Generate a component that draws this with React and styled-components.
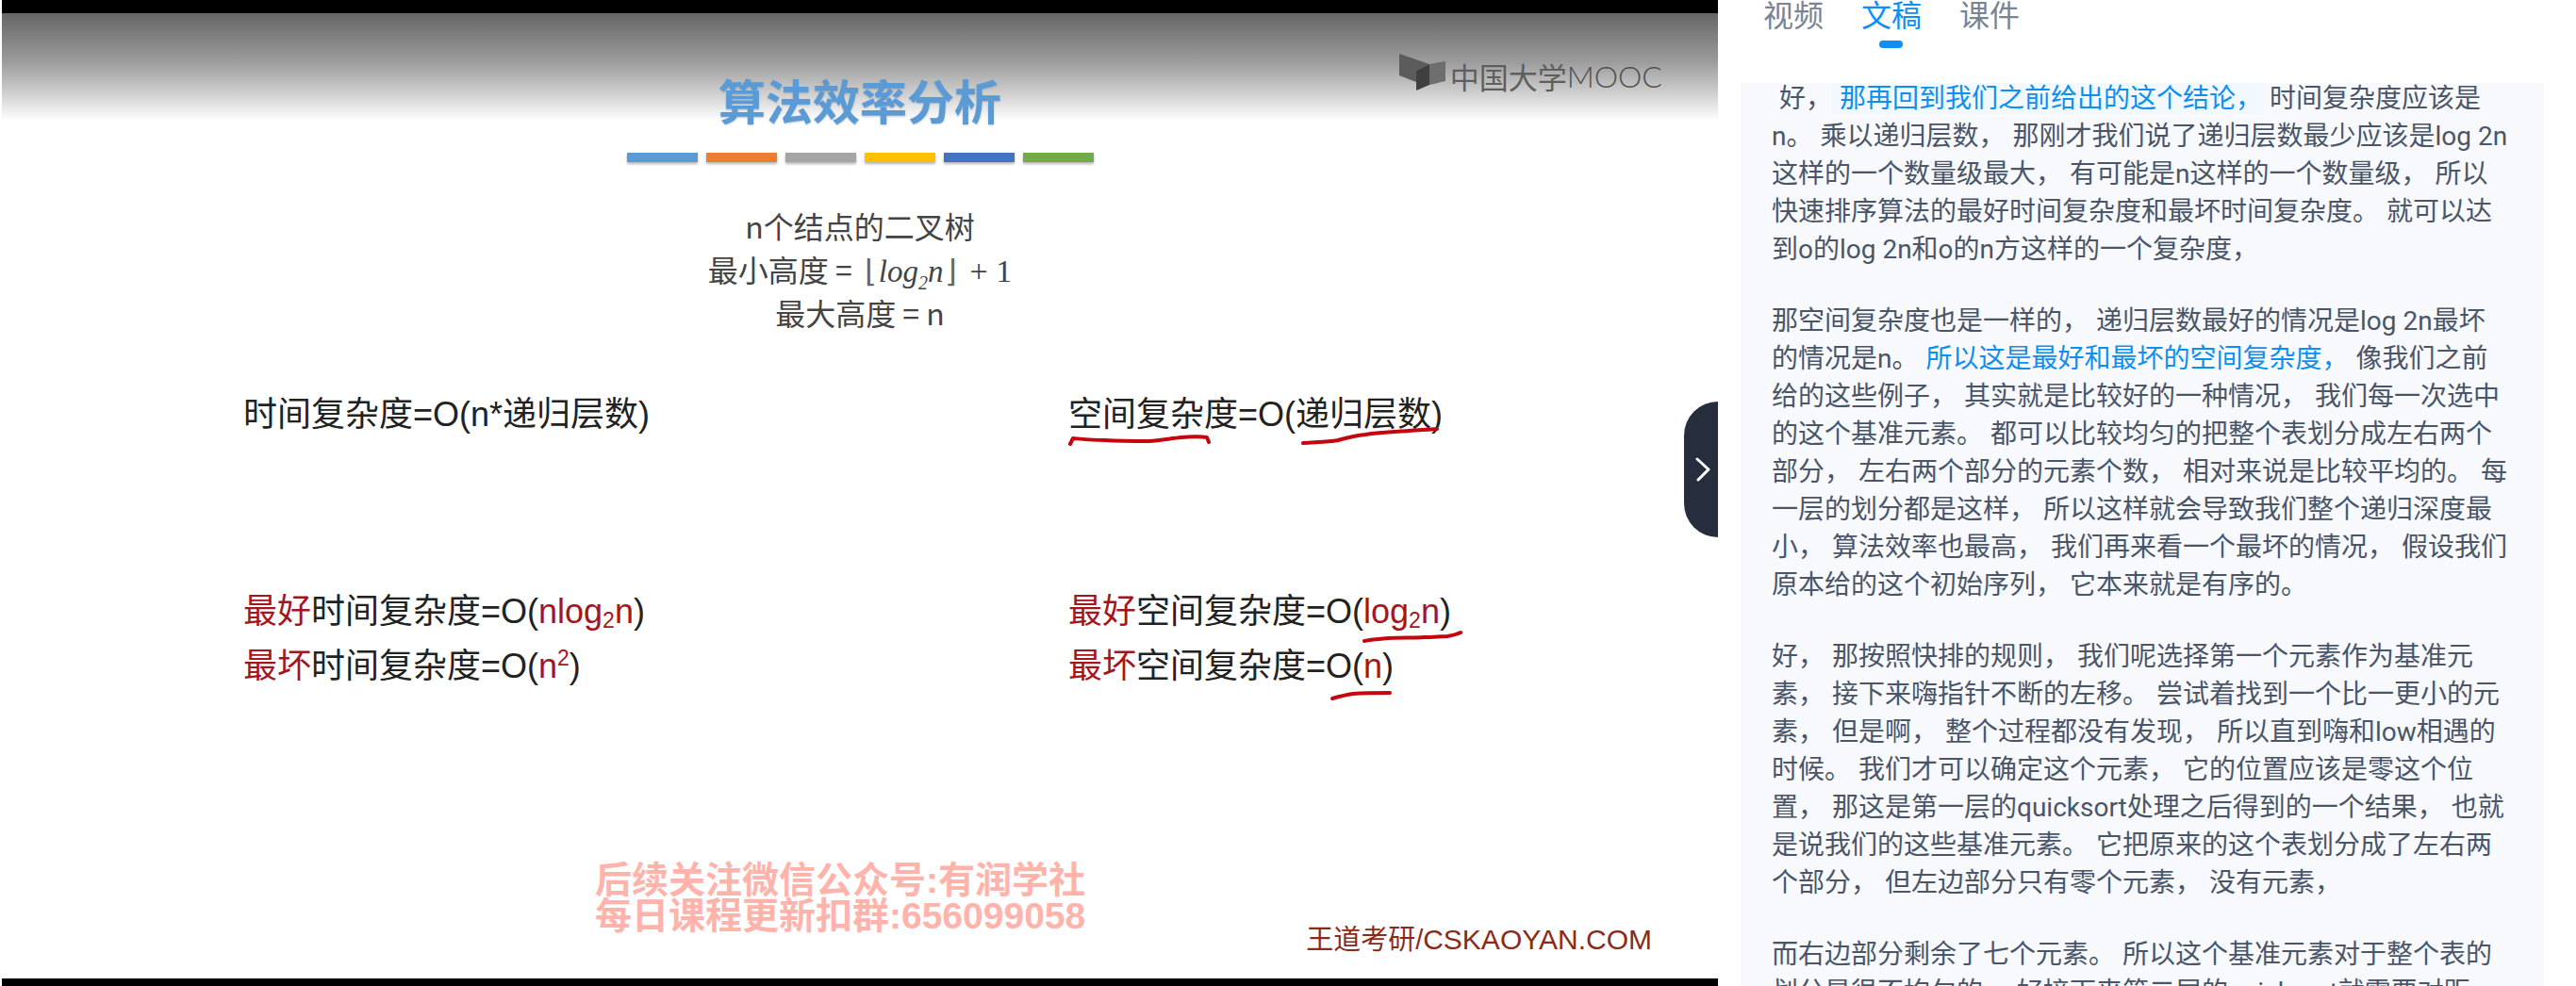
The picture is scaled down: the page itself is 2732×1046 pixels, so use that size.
import styled, { createGlobalStyle } from "styled-components";

const Global = createGlobalStyle`
  html, body {
    margin: 0;
    padding: 0;
    background: #fff;
    overflow: hidden;
  }
`;

const BARS = ["#5b9bd5", "#ed7d31", "#a5a5a5", "#ffc000", "#4472c4", "#70ad47"];

const TABS = [
  { label: "视频" },
  { label: "文稿", active: true },
  { label: "课件" },
];

const TRANSCRIPT = [
  [
    "好，",
    { text: "那再回到我们之前给出的这个结论，", tone: "active" },
    "时间复杂度应该是n。",
    "乘以递归层数，",
    "那刚才我们说了递归层数最少应该是log 2n这样的一个数量级最大，",
    "有可能是n这样的一个数量级，",
    "所以快速排序算法的最好时间复杂度和最坏时间复杂度。",
    "就可以达到o的log 2n和o的n方这样的一个复杂度，",
  ],
  [
    "那空间复杂度也是一样的，",
    "递归层数最好的情况是log 2n最坏的情况是n。",
    { text: "所以这是最好和最坏的空间复杂度，", tone: "mark" },
    "像我们之前给的这些例子，",
    "其实就是比较好的一种情况，",
    "我们每一次选中的这个基准元素。",
    "都可以比较均匀的把整个表划分成左右两个部分，",
    "左右两个部分的元素个数，",
    "相对来说是比较平均的。",
    "每一层的划分都是这样，",
    "所以这样就会导致我们整个递归深度最小，",
    "算法效率也最高，",
    "我们再来看一个最坏的情况，",
    "假设我们原本给的这个初始序列，",
    "它本来就是有序的。",
  ],
  [
    "好，",
    "那按照快排的规则，",
    "我们呢选择第一个元素作为基准元素，",
    "接下来嗨指针不断的左移。",
    "尝试着找到一个比一更小的元素，",
    "但是啊，",
    "整个过程都没有发现，",
    "所以直到嗨和low相遇的时候。",
    "我们才可以确定这个元素，",
    "它的位置应该是零这个位置，",
    "那这是第一层的quicksort处理之后得到的一个结果，",
    "也就是说我们的这些基准元素。",
    "它把原来的这个表划分成了左右两个部分，",
    "但左边部分只有零个元素，",
    "没有元素，",
  ],
  [
    "而右边部分剩余了七个元素。",
    "所以这个基准元素对于整个表的划分是很不均匀的，",
    "好接下来第二层的quicksort就需要对距",
  ],
];

export default function App() {
  return (
    <Page>
      <Global />
      <Video>
        <Letterbox $h={14} />
        <Slide>
          <Logo>
            <svg width="55" height="50" viewBox="12 10 55 50">
              <path d="M13 12 L45 23 L31 30 L31 42 L13 35 Z" fill="#5c5c5c" />
              <path d="M45 23 L62 20 L62 41 L45 45 Z" fill="#6e6e6e" />
              <path d="M31 30 L45 23 L45 45 L31 51 L31 56 Z" fill="#3f3f3f" />
            </svg>
            中国大学<LogoLatin>MOOC</LogoLatin>
          </Logo>
          <Title>算法效率分析</Title>
          <BarRow>
            {BARS.map((c) => (
              <Bar key={c} $color={c} />
            ))}
          </BarRow>
          <Caption>
            <div>n个结点的二叉树</div>
            <div>
              最小高度 =
              <MathText>
                <Bracket>⌊</Bracket>log<sub>2</sub>n<Bracket>⌋</Bracket>
              </MathText>
              <MathPlain>+ 1</MathPlain>
            </div>
            <div>最大高度 = n</div>
          </Caption>
          <FormulaGrid>
            <Formula>时间复杂度=O(n*递归层数)</Formula>
            <Formula>空间复杂度=O(递归层数)</Formula>
          </FormulaGrid>
          <FormulaGrid $gap={151}>
            <div>
              <Formula><Red>最好</Red>时间复杂度=O(<Red>nlog<Small>2</Small>n</Red>)</Formula>
              <Formula><Red>最坏</Red>时间复杂度=O(<Red>n<Small $up>2</Small></Red>)</Formula>
            </div>
            <div>
              <Formula><Red>最好</Red>空间复杂度=O(<Red>log<Small>2</Small>n</Red>)</Formula>
              <Formula><Red>最坏</Red>空间复杂度=O(<Red>n</Red>)</Formula>
            </div>
          </FormulaGrid>
          <SlideFooter>
            <Watermark>
              <div>后续关注微信公众号:有润学社</div>
              <div>每日课程更新扣群:656099058</div>
            </Watermark>
            <Credit>王道考研/<CreditLatin>CSKAOYAN.COM</CreditLatin></Credit>
          </SlideFooter>
          <Ink width="1820" height="1024" viewBox="2 14 1820 1024">
            <path d="M1135 471 L1138 465 C1150 466 1160 467 1172 467 C1190 468 1205 468 1218 468 C1232 467 1242 465 1253 464 C1262 463 1272 463 1280 464 L1282 469" />
            <path d="M1382 470 C1395 469 1408 469 1419 467 C1430 464 1438 462 1448 461 C1465 458 1480 458 1494 457 C1505 456 1515 456 1524 455" />
            <path d="M1447 680 C1455 678 1463 678 1473 677 C1487 676 1498 677 1511 676 C1520 676 1528 675 1535 675 C1541 674 1545 673 1549 671" />
            <path d="M1413 741 C1420 739 1428 737 1435 736 C1448 735 1460 735 1474 735" />
          </Ink>
          <Toggle>
            <svg width="18" height="28" viewBox="0 0 18 28">
              <path d="M3 3 L15 14 L4 25" fill="none" stroke="#fff" strokeWidth="3" strokeLinecap="round" strokeLinejoin="round" />
            </svg>
          </Toggle>
        </Slide>
        <Letterbox $h={8} />
      </Video>
      <Side>
        <Tabs>
          {TABS.map((t) => (
            <Tab key={t.label} $active={t.active}>
              {t.label}
              {t.active && <TabMark />}
            </Tab>
          ))}
        </Tabs>
        <Transcript>
          <TranscriptInner>
            {TRANSCRIPT.map((para, i) => (
              <Paragraph key={i}>
                {para.map((s, j) => {
                  const item = typeof s === "string" ? { text: s } : s;
                  return (
                    <Sentence key={j} $flush={i > 0 && j === 0} $tone={item.tone}>
                      {item.text}
                    </Sentence>
                  );
                })}
              </Paragraph>
            ))}
          </TranscriptInner>
        </Transcript>
      </Side>
    </Page>
  );
}

const Page = styled.div`
  display: flex;
  width: 2732px;
  height: 1046px;
  overflow: hidden;
  background: #fff;
`;

const Video = styled.div`
  display: flex;
  flex-direction: column;
  width: 1820px;
  height: 1046px;
  margin-left: 2px;
  flex: none;
`;

const Letterbox = styled.div`
  height: ${(p) => p.$h}px;
  background: #000;
  flex: none;
`;

const Slide = styled.div`
  position: relative;
  flex: 1;
  min-height: 0;
  display: flex;
  flex-direction: column;
  background: linear-gradient(to bottom, #666 0, #9a9a9a 50px, #cfcfcf 85px, #fff 114px);
  font-family: "Liberation Sans", "Noto Sans CJK SC", sans-serif;
`;

const Logo = styled.div`
  position: absolute;
  top: 41px;
  right: 59px;
  display: flex;
  align-items: center;
  height: 50px;
  font-size: 31px;
  color: #5e5e5e;
  font-family: "Noto Sans CJK SC", sans-serif;
`;

const LogoLatin = styled.span`
  font-family: "Lato", sans-serif;
  font-size: 32px;
  font-weight: 300;
  color: #505050;
`;

const Title = styled.h1`
  margin: 61px 0 0;
  height: 60px;
  font-size: 50px;
  line-height: 60px;
  font-weight: 700;
  text-align: center;
  color: #5b9bd5;
  text-shadow: 0 1px 2px rgba(60, 90, 130, 0.35);
  font-family: "Noto Sans CJK SC", sans-serif;
`;

const BarRow = styled.div`
  display: flex;
  justify-content: center;
  gap: 9px;
  margin-top: 27px;
`;

const Bar = styled.div`
  width: 75px;
  height: 10px;
  background: ${(p) => p.$color};
  box-shadow: 0 2px 3px rgba(0, 0, 0, 0.3);
`;

const Caption = styled.div`
  margin-top: 44px;
  height: 138px;
  text-align: center;
  font-size: 32px;
  line-height: 46px;
  color: #444;
  font-family: "Noto Sans CJK SC", sans-serif;
`;

const MathText = styled.span`
  margin-left: 11px;
  font-family: "Liberation Serif", serif;
  font-style: italic;
  font-size: 33px;
  line-height: 1;
  sub {
    font-size: 20px;
    line-height: 0;
  }
`;

const Bracket = styled.span`
  margin: 0 2px;
  font-family: "DejaVu Sans", sans-serif;
  font-style: normal;
  font-weight: 200;
  line-height: 1;
  color: #666;
`;

const MathPlain = styled.span`
  margin-left: 11px;
  font-family: "Liberation Serif", serif;
  font-size: 34px;
  line-height: 1;
`;

const FormulaGrid = styled.div`
  display: grid;
  grid-template-columns: 875px 1fr;
  margin-top: ${(p) => p.$gap || 57}px;
  padding-left: 256px;
`;

const Formula = styled.div`
  font-size: 36px;
  line-height: 58px;
  color: #222;
  white-space: nowrap;
`;

const Red = styled.span`
  color: #a3161b;
`;

const Small = styled.span`
  font-size: 23px;
  line-height: 0;
  vertical-align: ${(p) => (p.$up ? "13px" : "-5px")};
`;

const SlideFooter = styled.div`
  display: flex;
  justify-content: space-between;
  align-items: flex-end;
  height: 97px;
  margin-top: 179px;
  padding: 0 70px 0 629px;
`;

const Watermark = styled.div`
  align-self: flex-start;
  font-size: 39px;
  line-height: 38px;
  font-weight: 700;
  color: #ffb3ab;
  white-space: nowrap;
`;

const Credit = styled.div`
  font-size: 29px;
  line-height: 30px;
  color: #8c2a1a;
  white-space: nowrap;
`;

const CreditLatin = styled.span`
  font-size: 30px;
`;

const Ink = styled.svg`
  position: absolute;
  inset: 0;
  pointer-events: none;
  path {
    fill: none;
    stroke: #c4060f;
    stroke-width: 4;
    stroke-linecap: round;
    stroke-linejoin: round;
  }
`;

const Toggle = styled.div`
  position: absolute;
  right: 0;
  top: 412px;
  width: 36px;
  height: 144px;
  border-radius: 36px 0 0 36px;
  background: #262e3d;
  display: flex;
  align-items: center;
  justify-content: center;
  padding-left: 3px;
  box-sizing: border-box;
`;

const Side = styled.div`
  display: flex;
  flex-direction: column;
  width: 852px;
  height: 1046px;
  margin-left: 24px;
  flex: none;
  font-family: "Roboto", "Noto Sans CJK SC", sans-serif;
`;

const Tabs = styled.div`
  display: flex;
  gap: 40px;
  height: 88px;
  padding-left: 24px;
  flex: none;
`;

const Tab = styled.div`
  position: relative;
  font-size: 32px;
  line-height: 34px;
  height: 34px;
  color: ${(p) => (p.$active ? "#0d8ff5" : "#7a8394")};
`;

const TabMark = styled.span`
  position: absolute;
  left: 19px;
  top: 43px;
  width: 25px;
  height: 8px;
  border-radius: 4px;
  background: #0d8ff5;
`;

const Transcript = styled.div`
  flex: 1;
  min-height: 0;
  background: #f7f9fd;
  padding: 0 36px 0 33px;
  overflow: hidden;
`;

const TranscriptInner = styled.div`
  margin-top: -3px;
`;

const Paragraph = styled.p`
  margin: 0 0 36px;
  font-size: 28px;
  line-height: 40px;
  color: #4a5568;
`;

const Sentence = styled.span`
  padding-left: ${(p) => (p.$flush ? 0 : 8)}px;
  ${(p) => p.$tone && "color: #0d8ff0;"}
  ${(p) => p.$tone === "active" && "background: #f1f9fe;"}
`;
